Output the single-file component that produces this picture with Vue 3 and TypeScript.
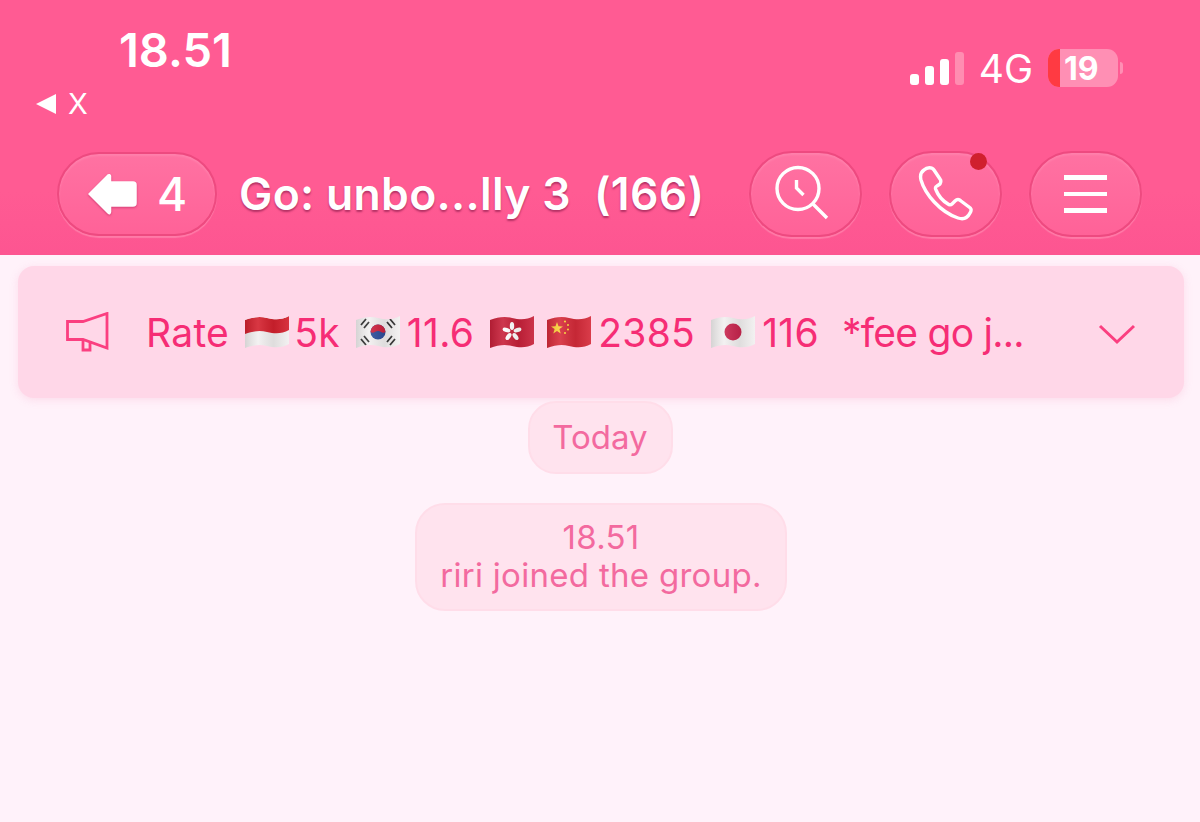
<script setup lang="ts">
type TickerItem = { flag: string; text?: string }

const wave = 'M0 5C8 2 15 1 22 3C30 5 37 5 44 1V29C37 33 30 33 22 31C15 29 8 30 0 33Z'

const ticker: TickerItem[] = [
  { flag: 'id', text: '5k' },
  { flag: 'kr', text: '11.6' },
  { flag: 'hk' },
  { flag: 'cn', text: '2385' },
  { flag: 'jp', text: '116' },
]
</script>

<template>
  <div class="page">
    <header class="top">
      <div class="status">
        <div class="status-left">
          <span class="clock">18.51</span>
          <span class="return"><i class="return-arrow" />X</span>
        </div>
        <div class="status-right">
          <span class="signal"><i /><i /><i /><i /></span>
          <span class="network">4G</span>
          <span class="battery"><span class="battery-low" /><span class="battery-num">19</span></span>
          <i class="battery-cap" />
        </div>
      </div>

      <nav class="nav">
        <button class="pill back">
          <svg class="back-arrow" width="50" height="44" viewBox="0 0 50 44">
            <path d="M2 22 21 3Q23 2 23.500 4V10H46Q49 10 49 13V31Q49 34 46 34H23.500V40Q23 43 21 41Z" fill="#fff" stroke="#fff" stroke-width="1.500" stroke-linejoin="round" />
          </svg>
          <span>4</span>
        </button>
        <h1 class="title">Go: unbo...lly 3&nbsp; (166)</h1>
        <div class="actions">
          <button class="pill action">
            <svg class="search-icon" width="56" height="56" viewBox="0 0 56 56" fill="none" stroke="#fff" stroke-width="3.400">
              <circle cx="20" cy="22.500" r="21" />
              <path d="M18.500 14V22L25.500 29M34.500 37.500 49 52" />
            </svg>
          </button>
          <button class="pill action">
            <svg width="56" height="56" viewBox="0 0 56 56" fill="none" stroke="#fff" stroke-width="3.400" stroke-linejoin="round">
              <path d="M6 4 C3 6 2 10 3 14 C7 28 22 46 40 52 C46 54 50 51 52 47 C54 44 53 42 51 41 L43 35 C41 33 39 33 37 35 L34 38 C33 39 31 39 30 38 C25 35 20 29 18 24 C17 22 17 21 19 20 L22 18 C23 16 23 14 22 13 L16 4 C14 1 9 1 6 4Z" />
            </svg>
            <i class="dot" />
          </button>
          <button class="pill action">
            <span class="burger"><i /><i /><i /></span>
          </button>
        </div>
      </nav>
    </header>

    <main class="chat">
      <section class="notice">
        <svg class="horn" width="44" height="40" viewBox="0 0 44 40" fill="none" stroke="#fb3f80" stroke-width="2.800">
          <path d="M1.500 9.500H17L41 1.500V36L17 27.500H1.500ZM17 27.500V38H24V30" />
        </svg>
        <p class="ticker">
          <span class="rate">Rate</span>
          <template v-for="item in ticker" :key="item.flag">
            <svg class="flag" :class="`flag-${item.flag}`" width="44" height="34" viewBox="0 0 44 34">
              <defs>
                <clipPath :id="`wave-${item.flag}`"><path :d="wave" /></clipPath>
                <linearGradient :id="`shade-${item.flag}`" x1="0" x2="1" y1="0" y2="0">
                  <stop offset="0" stop-color="#000" stop-opacity=".12" />
                  <stop offset=".3" stop-color="#fff" stop-opacity=".1" />
                  <stop offset=".65" stop-color="#000" stop-opacity=".08" />
                  <stop offset="1" stop-color="#fff" stop-opacity=".08" />
                </linearGradient>
              </defs>
              <g :clip-path="`url(#wave-${item.flag})`">
                <template v-if="item.flag === 'id'">
                  <rect width="44" height="34" fill="#f2f0f0" />
                  <path d="M0 5C8 2 15 1 22 3C30 5 37 5 44 1V15C37 19 30 19 22 17C15 15 8 16 0 19Z" fill="#d4212e" />
                </template>
                <template v-else-if="item.flag === 'kr'">
                  <rect width="44" height="34" fill="#f2f0f0" />
                  <circle cx="22" cy="17" r="7.500" fill="#2f4f9c" />
                  <path d="M14.500 17a7.500 7.500 0 0 1 15 0c-3 2-5-1-7.500-1s-4.500 3-7.500 1Z" fill="#cf2340" />
                  <g stroke="#333" stroke-width="1.800">
                    <path d="M5 10l5-6M8 13l5-6M31 7l5 6M34 4l5 6M5 24l5 6M8 21l5 6M31 27l5-6M34 30l5-6" />
                  </g>
                </template>
                <template v-else-if="item.flag === 'hk'">
                  <rect width="44" height="34" fill="#c8213a" />
                  <g fill="#fff">
                    <ellipse cx="22" cy="11" rx="2.200" ry="4" />
                    <ellipse cx="16.500" cy="15" rx="2.200" ry="4" transform="rotate(-72 16.500 15)" />
                    <ellipse cx="27.500" cy="15" rx="2.200" ry="4" transform="rotate(72 27.500 15)" />
                    <ellipse cx="18.500" cy="21.500" rx="2.200" ry="4" transform="rotate(-144 18.500 21.500)" />
                    <ellipse cx="25.500" cy="21.500" rx="2.200" ry="4" transform="rotate(144 25.500 21.500)" />
                  </g>
                </template>
                <template v-else-if="item.flag === 'cn'">
                  <rect width="44" height="34" fill="#d62b3a" />
                  <path d="M10 7l1.500 4.300 4.500.1-3.600 2.700 1.300 4.300L10 15.900l-3.700 2.500 1.300-4.300L4 11.400l4.500-.1Z" fill="#fbd13a" />
                  <g fill="#fbd13a">
                    <circle cx="18" cy="6.500" r="1.100" /><circle cx="21" cy="10" r="1.100" />
                    <circle cx="21" cy="14.500" r="1.100" /><circle cx="18" cy="18" r="1.100" />
                  </g>
                </template>
                <template v-else>
                  <rect width="44" height="34" fill="#f2f0f0" />
                  <circle cx="22" cy="17" r="8.500" fill="#c9264f" />
                </template>
                <rect width="44" height="34" :fill="`url(#shade-${item.flag})`" />
              </g>
            </svg>
            <span v-if="item.text" class="value">{{ item.text }}</span>
          </template>
          <span class="fee">*fee go j...</span>
        </p>
        <svg class="chevron" width="38" height="22" viewBox="0 0 38 22" fill="none" stroke="#fb3f80" stroke-width="3">
          <path d="M2 3l17 16L36 3" />
        </svg>
      </section>

      <div class="system today">Today</div>
      <div class="system joined">
        <div>18.51</div>
        <div>riri joined the group.</div>
      </div>
    </main>
  </div>
</template>

<style scoped>
.page {
  display: flex;
  flex-direction: column;
  width: 1200px;
  height: 822px;
  overflow: hidden;
  background: #fff2fa;
  font-family: Inter, "Liberation Sans", sans-serif;
}

.top {
  height: 255px;
  box-sizing: border-box;
  background: linear-gradient(#ff5b93, #ff5b93 75%, #fd5591);
  color: #fff;
}

.status {
  display: flex;
  justify-content: space-between;
  height: 151px;
}

.status-left {
  display: flex;
  flex-direction: column;
  padding: 22px 0 0 36px;
}

.clock {
  margin-left: 83px;
  font-size: 47px;
  font-weight: 600;
  line-height: 55px;
}

.return {
  display: flex;
  align-items: center;
  gap: 12px;
  margin-top: 2px;
  font-size: 29px;
  line-height: 50px;
}

.return-arrow {
  width: 0;
  height: 0;
  border-top: 10px solid transparent;
  border-bottom: 10px solid transparent;
  border-right: 20px solid #fff;
}

.status-right {
  display: flex;
  align-items: center;
  height: 40px;
  margin: 48px 77px 0 0;
}

.signal {
  display: flex;
  align-items: flex-end;
  gap: 6px;
  height: 33px;
}

.signal i {
  width: 9px;
  border-radius: 3px;
  background: #fff;
}

.signal i:nth-child(1) { height: 11px; }
.signal i:nth-child(2) { height: 19px; }
.signal i:nth-child(3) { height: 26px; }
.signal i:nth-child(4) { height: 33px; background: #ff8db1; }

.network {
  margin-left: 15px;
  font-size: 39px;
  font-weight: 400;
}

.battery {
  position: relative;
  display: flex;
  align-items: center;
  width: 70px;
  height: 38px;
  margin-left: 15px;
  overflow: hidden;
  border-radius: 11px;
  background: #ff8fb4;
}

.battery-low {
  width: 12px;
  height: 100%;
  background: #ff3a42;
}

.battery-num {
  margin-left: 4px;
  font-size: 32px;
  font-weight: 700;
}

.battery-cap {
  width: 3px;
  height: 12px;
  margin-left: 2px;
  border-radius: 0 3px 3px 0;
  background: #ff8fb4;
}

.nav {
  display: flex;
  align-items: center;
  padding: 0 58px 0 57px;
}

.pill {
  position: relative;
  display: flex;
  align-items: center;
  justify-content: center;
  box-sizing: border-box;
  padding: 0;
  border: 2px solid #ee4a80;
  background: linear-gradient(#ff72a2, #ff6298);
  box-shadow: inset 0 2px 2px #ff80ac, 0 2px 1px #ff7ba8;
  color: #fff;
  font-family: inherit;
}

.back {
  flex: none;
  gap: 20px;
  width: 160px;
  height: 84px;
  border-radius: 42px;
  font-size: 46px;
  font-weight: 500;
}

.back-arrow {
  filter: drop-shadow(0 1px 1px #d23c72);
}

.title {
  flex: 1;
  margin: 0 0 0 22px;
  font-size: 44.500px;
  font-weight: 600;
  line-height: 85px;
  letter-spacing: 0.300px;
  white-space: nowrap;
  text-shadow: 0 2px 2px #b53265;
}

.actions {
  display: flex;
  gap: 27px;
}

.action {
  width: 113px;
  height: 86px;
  border-radius: 43px;
}

.search-icon {
  overflow: visible;
}

.dot {
  position: absolute;
  top: 0;
  right: 13px;
  width: 17px;
  height: 17px;
  border-radius: 50%;
  background: #d0202e;
}

.burger {
  display: flex;
  flex-direction: column;
  gap: 12px;
  width: 43px;
}

.burger i {
  height: 4.500px;
  background: #fff;
}

.chat {
  display: flex;
  flex-direction: column;
  align-items: center;
  padding: 11px 16px 0 18px;
}

.notice {
  display: flex;
  align-items: center;
  align-self: stretch;
  box-sizing: border-box;
  height: 132px;
  padding: 0 48px;
  border-radius: 16px;
  background: #ffd7e8;
  box-shadow: 0 2px 8px rgb(240 140 180 / 22%);
}

.horn {
  flex: none;
}

.ticker {
  display: flex;
  flex: 1;
  align-items: center;
  margin: 0 0 0 36px;
  color: #f62d75;
  font-size: 39px;
  letter-spacing: 0.300px;
  white-space: nowrap;
}

.rate {
  margin-right: 16px;
}

.flag {
  flex: none;
  margin-right: 7px;
}

.flag-id {
  margin-right: 5px;
}

.flag-hk {
  margin-right: 13px;
}

.value {
  margin-right: 16px;
}

.fee {
  margin-left: 7px;
  letter-spacing: -0.750px;
}

.chevron {
  flex: none;
  margin-top: 4px;
}

.system {
  box-sizing: border-box;
  border: 2px solid #ffdde9;
  background: #ffe3ee;
  color: #f36a9f;
  font-size: 33px;
  line-height: 38px;
  letter-spacing: 0.300px;
  text-align: center;
}

.today {
  width: 145px;
  height: 73px;
  margin: 3px 2px 0 0;
  border-radius: 28px;
  letter-spacing: 0;
  line-height: 69px;
}

.joined {
  width: 372px;
  height: 108px;
  margin-top: 29px;
  padding-top: 13px;
  border-radius: 30px;
}
</style>

<style>
button {
  cursor: pointer;
}
</style>
